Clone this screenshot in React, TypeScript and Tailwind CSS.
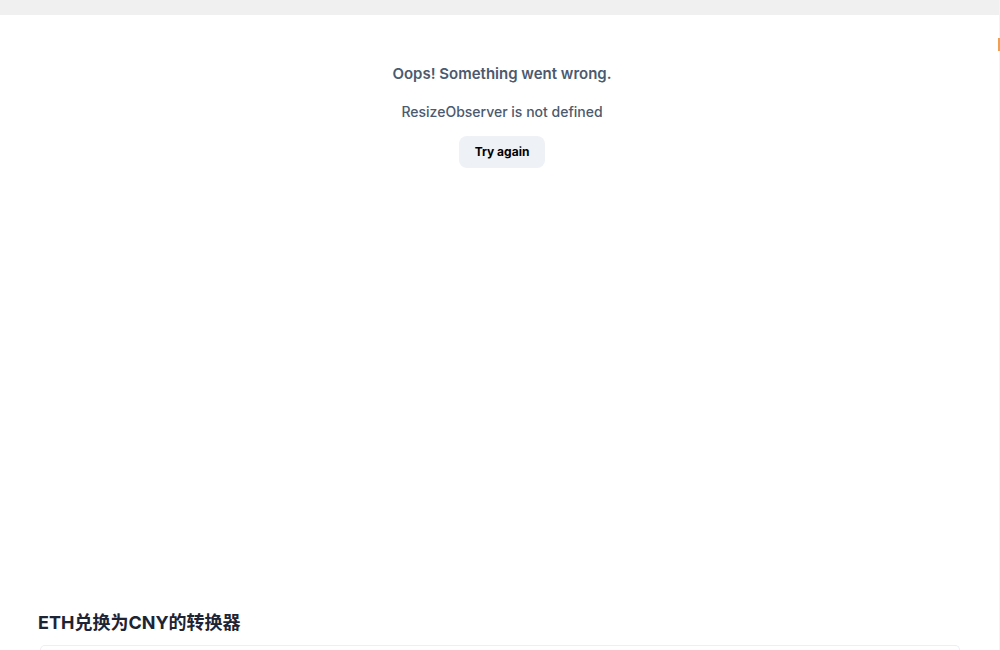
export default function App() {
  return (
    <div
      className="relative flex h-[650px] w-[1000px] flex-col overflow-hidden bg-white"
      style={{ fontFamily: 'Inter, "Noto Sans CJK SC", sans-serif' }}
    >
      {/* top strip */}
      <div className="h-[15px] w-full shrink-0 bg-[#f0f0f0]" />

      {/* error boundary fallback */}
      <div className="flex flex-col items-center pl-[4px] pt-[50px]">
        <p className="text-[15px] font-semibold leading-[18px] text-[#4b5a6e]">
          Oops! Something went wrong.
        </p>
        <p className="mt-[20px] text-[14px] font-medium leading-[18px] text-[#4b5a6e]">
          ResizeObserver is not defined
        </p>
        <button className="mt-[15px] h-[32px] w-[86px] rounded-lg bg-[#eef1f5] text-[12px] font-bold text-black">
          Try again
        </button>
      </div>

      <div className="flex-1" />

      {/* converter section */}
      <div className="px-[38px]">
        <h2 className="text-[18px] font-bold leading-[24px] text-[#1e2433]">ETH兑换为CNY的转换器</h2>
        <div className="mx-[2px] mt-[10px] h-[5px] rounded-t-[14px] border border-b-0 border-[#eceff3] bg-white" />
      </div>

      {/* right edge marks */}
      <div className="absolute right-0 top-0 h-full w-px bg-[#f3f3f3]" />
      <div className="absolute right-0 top-[38px] h-[13px] w-[2px] bg-[#f0a050]" />
    </div>
  );
}
